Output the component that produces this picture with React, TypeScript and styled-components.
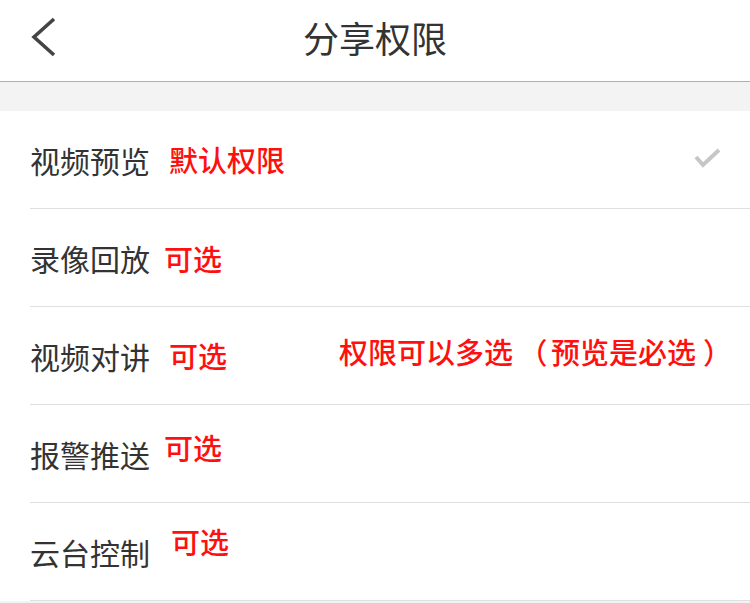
import React from "react";
import styled, { createGlobalStyle } from "styled-components";

const Global = createGlobalStyle`
  html, body { margin: 0; padding: 0; background: #f3f3f3; }
  body { font-family: "Noto Sans CJK SC", "Noto Sans", sans-serif; }
`;

const Page = styled.div`
  width: 750px;
  min-height: 603px;
  background: #f3f3f3;
  display: flex;
  flex-direction: column;
`;

const Header = styled.header`
  height: 81px;
  background: #fff;
  border-bottom: 1px solid #b0b0b0;
  display: flex;
  align-items: center;
  justify-content: center;
  position: relative;
`;

const BackButton = styled.button`
  position: absolute;
  left: 24px;
  top: 12px;
  width: 40px;
  height: 52px;
  border: none;
  background: none;
  padding: 0;
  display: flex;
  align-items: center;
  justify-content: center;
`;

const Title = styled.h1`
  margin: 0;
  font-size: 36px;
  font-weight: 400;
  color: #333;
  line-height: 1;
  transform: translateY(-4px);
`;

const Gap = styled.div`
  height: 29px;
`;

const List = styled.ul`
  margin: 0;
  padding: 0;
  list-style: none;
  background: #fff;
`;

const Row = styled.li`
  height: 98px;
  padding-left: 30px;
  display: flex;
`;

const RowInner = styled.div`
  flex: 1;
  display: flex;
  align-items: center;
  border-bottom: 1px solid #e0e0e0;
  padding-right: 30px;
  position: relative;
  min-width: 0;
`;

const Label = styled.span`
  flex-shrink: 0;
  white-space: nowrap;
  font-size: 30px;
  color: #333;
  line-height: 1;
`;

const Note = styled.span<{ $dx: number; $dy: number }>`
  flex-shrink: 0;
  margin-left: ${(p) => p.$dx}px;
  font-size: 29px;
  font-weight: 500;
  color: #ff1010;
  line-height: 1;
  transform: translateY(${(p) => p.$dy}px);
  white-space: nowrap;
`;

const Paren = styled.span<{ $open?: boolean }>`
  display: inline-block;
  box-sizing: border-box;
  width: ${(p) => (p.$open ? 38 : 29)}px;
  padding-left: ${(p) => (p.$open ? 2 : 7)}px;
  text-align: ${(p) => (p.$open ? "center" : "left")};
`;

const Check = styled.svg`
  flex-shrink: 0;
  margin-left: auto;
  margin-right: -3px;
`;

const rows = [
  { label: "视频预览", note: "默认权限", dx: 19, dy: 0, check: true },
  { label: "录像回放", note: "可选", dx: 14, dy: 1 },
  { label: "视频对讲", note: "可选", dx: 19, dy: 0, extra: true },
  { label: "报警推送", note: "可选", dx: 14, dy: -6 },
  { label: "云台控制", note: "可选", dx: 21, dy: -10 },
];

export default function App() {
  return (
    <Page>
      <Global />
      <Header>
        <BackButton aria-label="返回">
          <svg width="40" height="52" viewBox="0 0 40 52">
            <polyline
              points="30,7 10,25 30,43"
              fill="none"
              stroke="#444"
              strokeWidth="3.6"
            />
          </svg>
        </BackButton>
        <Title>分享权限</Title>
      </Header>
      <Gap />
      <List>
        {rows.map((r) => (
          <Row key={r.label}>
            <RowInner>
              <Label>{r.label}</Label>
              <Note $dx={r.dx} $dy={r.dy}>{r.note}</Note>
              {r.extra && (
                <Note $dx={112} $dy={-4}>
                  权限可以多选<Paren $open>（</Paren>预览是必选<Paren>）</Paren>
                </Note>
              )}
              {r.check && (
                <Check width="30" height="24" viewBox="0 0 30 24">
                  <polyline
                    points="3,9 10,17 26,2"
                    fill="none"
                    stroke="#c6c6c6"
                    strokeWidth="4"
                  />
                </Check>
              )}
            </RowInner>
          </Row>
        ))}
      </List>
    </Page>
  );
}
